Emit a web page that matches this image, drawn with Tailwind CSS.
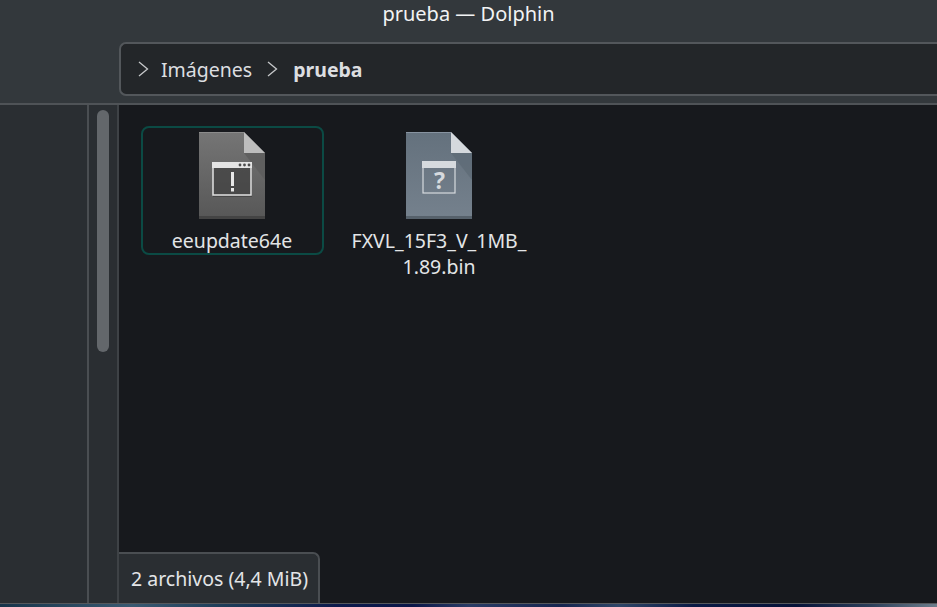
<!DOCTYPE html>
<html lang="en">
<head>
    <meta charset="UTF-8">
    <meta name="viewport" content="width=device-width, initial-scale=1.0">
    <title>prueba — Dolphin</title>
    <script src="https://cdn.jsdelivr.net/npm/@tailwindcss/browser@4"></script>
</head>
<body class="h-[607px] w-[937px] overflow-hidden bg-[#2a2e32] font-['Noto_Sans',sans-serif] text-[19.5px] text-[#e3e5e7]">
    <div class="flex h-[607px] flex-col">
        <!-- title + toolbar -->
        <header class="h-[105px] shrink-0 border-b-2 border-[#4f5357] bg-[#33383c]">
            <h1 class="h-[42px] text-center text-[20px] leading-[27px] text-[#f2f3f4]">prueba — Dolphin</h1>
            <div class="ml-[119px] flex h-[54px] items-center rounded-l-[7px] border-2 border-r-0 border-[#53575b] bg-[#232629] pl-[14px]">
                <svg class="h-[18px] w-[16px] shrink-0" viewBox="0 0 16 18" fill="none" stroke="#c6c8ca" stroke-width="1.3"><path d="M4 2 L12.5 9 L4 16"/></svg>
                <span class="ml-[10px] leading-[27px] text-[#dcdee0]">Imágenes</span>
                <svg class="ml-[12px] h-[18px] w-[16px] shrink-0" viewBox="0 0 16 18" fill="none" stroke="#c6c8ca" stroke-width="1.3"><path d="M4 2 L12.5 9 L4 16"/></svg>
                <span class="ml-[13px] font-bold leading-[27px] text-[#dcdee0]">prueba</span>
            </div>
        </header>

        <div class="flex min-h-0 flex-1">
            <!-- places panel -->
            <aside class="w-[87px] shrink-0 bg-[#2a2e32]"></aside>
            <div class="w-[2px] shrink-0 bg-[#4a4e52]"></div>
            <!-- scrollbar -->
            <div class="w-[30px] shrink-0 border-r-2 border-[#3e4246] pl-[8px] pt-[5px]">
                <div class="h-[242px] w-[12px] rounded-full bg-[#63676b]"></div>
            </div>

            <!-- file view -->
            <main class="flex min-w-0 flex-1 flex-col justify-between bg-[#17191d]">
                <div class="flex gap-[24px] pl-[22px] pt-[21px]">
                    <div class="flex h-[129px] w-[183px] flex-col items-center rounded-[8px] border-2 border-[#0b4a44] pr-[1px] pt-[4px]">
                        <svg class="h-[87px] w-[66px] shrink-0" viewBox="0 0 66 87">
                            <defs>
                                <linearGradient id="g1" x1="0" y1="0" x2="0" y2="1"><stop offset="0" stop-color="#757575"/><stop offset="1" stop-color="#575757"/></linearGradient>
                            </defs>
                            <path d="M0 0H45L66 21V87H0Z" fill="url(#g1)"/>
                            <path d="M0 0H45V1H0Z" fill="#8b8b8b"/>
                            <path d="M0 84H66V87H0Z" fill="#444444"/>
                            <path d="M45 21H66V48Z" fill="#5c5c5c" opacity="0.8"/>
                            <path d="M45 0L66 21H45Z" fill="#bdbdbd"/>
                            <rect x="14" y="32" width="39" height="33" fill="#3f3f3f" opacity="0.7"/>
                            <rect x="14" y="31" width="38" height="32" fill="none" stroke="#e2e2e2" stroke-width="1.5"/>
                            <rect x="13" y="30" width="40" height="6" fill="#e4e4e4"/>
                            <circle cx="41" cy="33" r="1.4" fill="#4a4a4a"/>
                            <circle cx="45.5" cy="33" r="1.4" fill="#4a4a4a"/>
                            <circle cx="50" cy="33" r="1.4" fill="#4a4a4a"/>
                            <rect x="32" y="40" width="3" height="14" fill="#e8e8e8"/>
                            <rect x="32" y="56" width="3" height="3.5" fill="#e8e8e8"/>
                        </svg>
                        <span class="mt-[9px] leading-[26px]">eeupdate64e</span>
                    </div>
                    <div class="flex w-[182px] flex-col items-center pt-[6px]">
                        <svg class="h-[87px] w-[66px] shrink-0" viewBox="0 0 66 87">
                            <defs>
                                <linearGradient id="g2" x1="0" y1="0" x2="0" y2="1"><stop offset="0" stop-color="#64717d"/><stop offset="1" stop-color="#75818d"/></linearGradient>
                            </defs>
                            <path d="M0 0H45L66 21V87H0Z" fill="url(#g2)"/>
                            <path d="M0 0H45V1H0Z" fill="#8793a0"/>
                            <path d="M0 84H66V87H0Z" fill="#56616b"/>
                            <path d="M45 21H66V48Z" fill="#5d6975" opacity="0.7"/>
                            <path d="M45 0L66 21H45Z" fill="#d5d9dd"/>
                            <rect x="17" y="30" width="32" height="31" fill="none" stroke="#d6dade" stroke-width="1.2"/>
                            <rect x="16" y="29" width="34" height="7" fill="#d6dade"/>
                            <text x="33.5" y="57" text-anchor="middle" font-family="Noto Sans" font-weight="700" font-size="23" fill="#d6dade">?</text>
                        </svg>
                        <span class="mt-[9px] text-center leading-[26px]">FXVL_15F3_V_1MB_<br>1.89.bin</span>
                    </div>
                </div>
                <!-- status bar -->
                <div class="flex h-[51px] w-[201px] items-center rounded-tr-[7px] border-r-2 border-t-2 border-[#4a4e52] bg-[#2a2e32] pl-[12px] leading-[27px]">2 archivos (4,4 MiB)</div>
            </main>
        </div>

        <!-- wallpaper strip -->
        <div class="h-[4px] shrink-0 border-t border-[#55585c] bg-[linear-gradient(90deg,#17344a,#3a5a72_14%,#1d3c58_24%,#0c1a4c_36%,#0a1648_44%,#2a3c66_50%,#16254f_60%,#2f4668_66%,#0a1a45_74%,#061238_85%,#2c3f5a_93%,#6d7e8c)]"></div>
    </div>
</body>
</html>
